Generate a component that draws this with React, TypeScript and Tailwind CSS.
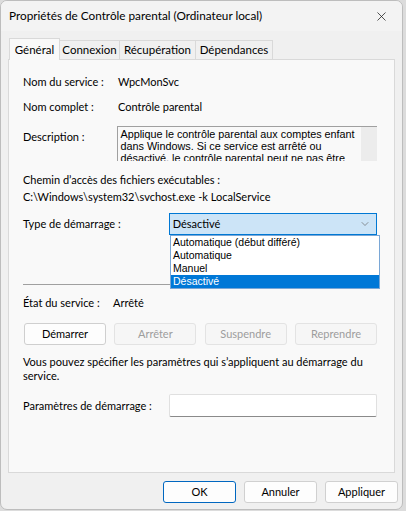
import { ChevronDown, X } from "lucide-react";

const font = { fontFamily: 'Lato, "Liberation Sans", Arial, sans-serif' };
const oldFont = { fontFamily: '"Liberation Sans", Arial, sans-serif' };

function Tab({ label, width, active }: { label: string; width: string; active?: boolean }) {
  if (active) {
    return (
      <div
        className={`relative z-10 -mb-px flex h-[22px] items-start justify-center border border-b-0 border-[#d9d9d9] bg-[#f9f9f9] pt-[3px] text-[11.5px] leading-4 text-black ${width}`}
      >
        {label}
      </div>
    );
  }
  return (
    <div
      className={`-ml-px mt-[3px] flex h-[19px] items-center justify-center border border-b-0 border-[#d9d9d9] bg-[#f0f0f0] text-[11.5px] leading-4 text-black ${width}`}
    >
      {label}
    </div>
  );
}

function SmallButton({ label, disabled }: { label: string; disabled?: boolean }) {
  return (
    <div
      className={
        disabled
          ? "flex h-[22px] w-[82px] items-center justify-center rounded-[3px] border border-[#e3e3e3] bg-[#f6f6f6] text-[11px] text-[#9d9d9d]"
          : "flex h-[22px] w-[82px] items-center justify-center rounded-[3px] border border-[#cfcfcf] bg-[#fdfdfd] text-[11px] text-black"
      }
    >
      {label}
    </div>
  );
}

export default function App() {
  return (
    <div className="h-[511px] w-[406px] overflow-hidden bg-[#dcdcdc] whitespace-nowrap" style={font}>
      <div className="flex h-[510px] w-[403px] flex-col overflow-hidden rounded-[7px] border border-[#bdbdbd] bg-[#f0f0f0]">
        {/* Title bar */}
        <div className="flex h-[30px] shrink-0 items-center justify-between bg-[#f3f3f3] pl-[8px] pr-[13px]">
          <span className="text-[11.75px] text-black">
            Propriétés de Contrôle parental (Ordinateur local)
          </span>
          <X className="h-[15px] w-[15px] text-[#1a1a1a]" strokeWidth={1.2} />
        </div>

        {/* Tabs */}
        <div className="ml-[8px] mt-[6px] flex items-end">
          <Tab label="Général" width="w-[51px]" active />
          <Tab label="Connexion" width="w-[61px]" />
          <Tab label="Récupération" width="w-[77px]" />
          <Tab label="Dépendances" width="w-[78px]" />
        </div>

        {/* Panel */}
        <div className="relative mx-[7px] h-[414px] border border-[#d9d9d9] bg-[#f9f9f9] pl-[14px] pr-[17px] pt-[14px] text-[11px] leading-4 text-black">
          <div className="flex h-4">
            <span className="w-[95px]">Nom du service :</span>
            <span>WpcMonSvc</span>
          </div>
          <div className="mt-[9px] flex h-4">
            <span className="w-[95px]">Nom complet :</span>
            <span>Contrôle parental</span>
          </div>
          <div className="mt-[11px] flex">
            <span className="w-[95px] pt-[3px]">Description :</span>
            <div className="flex h-[35px] w-[261px] overflow-hidden border-l border-t border-[#a0a0a0] bg-[#f9f9f9]">
              <div className="flex-1 overflow-hidden pl-[2px] pt-px text-[10.8px] leading-[12px]" style={oldFont}>
                Applique le contrôle parental aux comptes enfant
                <br />
                dans Windows. Si ce service est arrêté ou
                <br />
                désactivé, le contrôle parental peut ne pas être
              </div>
              <div className="w-[16px] shrink-0 bg-[#ececec]" />
            </div>
          </div>
          <div className="mt-[11px] h-4">Chemin d’accès des fichiers exécutables :</div>
          <div className="mt-[1px] h-4">C:\Windows\system32\svchost.exe -k LocalService</div>

          <div className="relative mt-[8px] flex items-center">
            <span className="w-[147px]">Type de démarrage :</span>
            <div className="flex h-[22px] w-[210px] items-center justify-between border border-[#0078d4] bg-[#cce4f7] pl-[3px] pr-[5px]">
              <span>Désactivé</span>
              <ChevronDown className="h-[12px] w-[12px] text-[#606060]" strokeWidth={1.3} />
            </div>
            <div
              className="absolute left-[147px] top-[22px] z-10 flex h-[54px] w-[210px] flex-col border border-[#7aa7d6] bg-white text-[10.5px] leading-[13px]"
              style={oldFont}
            >
              <div className="h-[13px] pl-[2px]">Automatique (début différé)</div>
              <div className="h-[13px] pl-[2px]">Automatique</div>
              <div className="h-[13px] pl-[2px]">Manuel</div>
              <div className="h-[13px] bg-[#0078d7] pl-[2px] text-white">Désactivé</div>
            </div>
          </div>

          <div className="mt-[49px] h-px bg-[#a0a0a0]" />

          <div className="mt-[10px] flex h-4">
            <span className="w-[90px]">État du service :</span>
            <span>Arrêté</span>
          </div>

          <div className="mt-[12px] flex justify-between pl-px">
            <SmallButton label="Démarrer" />
            <SmallButton label="Arrêter" disabled />
            <SmallButton label="Suspendre" disabled />
            <SmallButton label="Reprendre" disabled />
          </div>

          <div className="mt-[10px] leading-[14px]">
            Vous pouvez spécifier les paramètres qui s’appliquent au démarrage du
            <br />
            service.
          </div>

          <div className="mt-[11px] flex items-center">
            <span className="w-[147px]">Paramètres de démarrage :</span>
            <div className="h-[23px] w-[209px] rounded-[2px] border border-[#e0e0e0] border-b-[#8a8a8a] bg-white" />
          </div>
        </div>

        {/* Bottom buttons */}
        <div className="mt-[8px] flex justify-end gap-[8px] pr-[4px] text-[11px]">
          <div className="flex h-[22px] w-[73px] items-center justify-center rounded-[3px] border border-[#0067c0] bg-[#fdfdfd] text-black">
            OK
          </div>
          <div className="flex h-[22px] w-[73px] items-center justify-center rounded-[3px] border border-[#d0d0d0] bg-[#fdfdfd] text-black">
            Annuler
          </div>
          <div className="flex h-[22px] w-[73px] items-center justify-center rounded-[3px] border border-[#d0d0d0] bg-[#fdfdfd] text-black">
            Appliquer
          </div>
        </div>
      </div>
    </div>
  );
}
